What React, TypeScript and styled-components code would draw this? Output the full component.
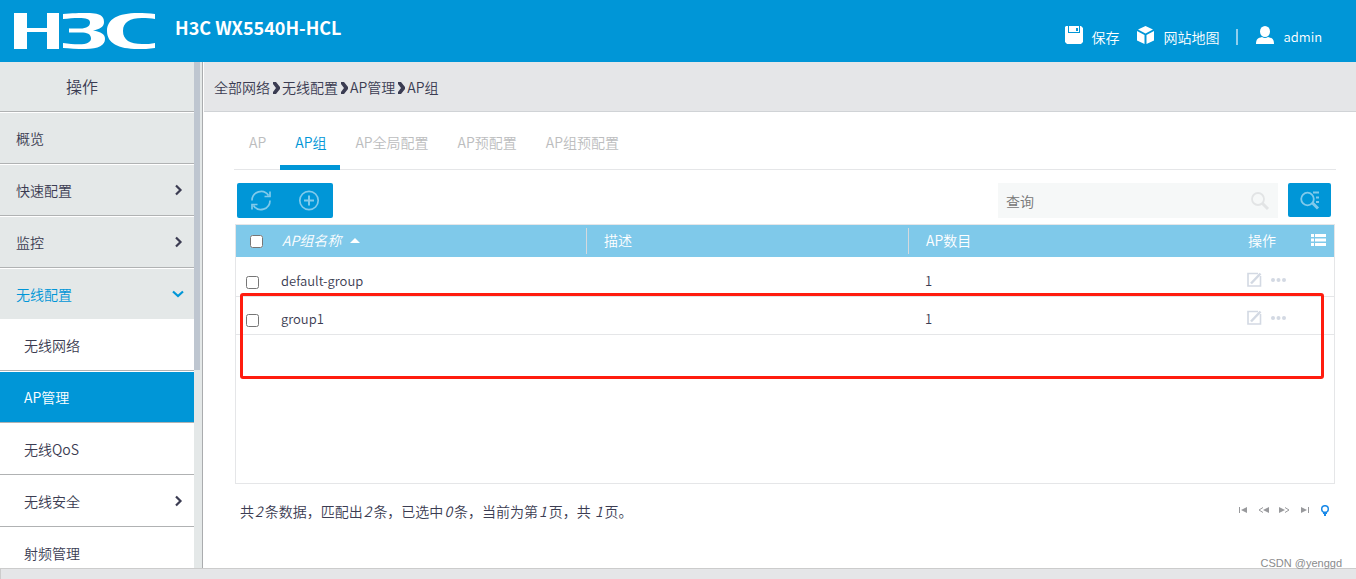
import React from 'react';
import styled, { createGlobalStyle } from 'styled-components';

const blue = '#0096d7';
const ink = '#3b3c52';
const line = '#e5e6e8';

const Global = createGlobalStyle`
  * { box-sizing: border-box; }
  body {
    margin: 0;
    color: ${ink};
    background: #fff;
    font: 350 14px/20px "Noto Sans CJK SC", sans-serif;
  }
  button, input { font: inherit; }
  button { border: 0; padding: 0; background: none; cursor: pointer; }
  a { color: inherit; text-decoration: none; }
`;

const Page = styled.div`
  height: 100vh;
  min-height: 520px;
  display: flex;
  flex-direction: column;
  overflow: hidden;
  position: relative;
`;

const Header = styled.header`
  flex: none;
  height: 62px;
  display: flex;
  background: ${blue};
  color: #fff;
  padding: 0 34px 0 13px;
`;

const Logo = styled.svg`
  width: 142px;
  height: 36px;
  margin-top: 13px;
`;

const Device = styled.h1`
  margin: 12px 0 0 20px;
  font-size: 18px;
  line-height: 30px;
  font-weight: 700;
`;

const HeaderLinks = styled.nav`
  margin-left: auto;
  padding-top: 26px;
  display: flex;
  align-items: flex-start;
`;

const HeaderLink = styled.a`
  display: flex;
  gap: 8px;
  line-height: 22px;
  & + & { margin-left: 17px; }
`;

const UserName = styled.span`
  font-size: 13px;
`;

const Rule = styled.span`
  width: 2px;
  height: 16px;
  margin: 3px 17px 0;
  background: #8fcfee;
`;

const Body = styled.div`
  flex: 1;
  min-height: 0;
  display: flex;
`;

const Sidebar = styled.nav`
  flex: none;
  width: 203px;
  display: flex;
  overflow: hidden;
  background: #e4e8e8;
  border-right: 1px solid #aaacae;
`;

const Menu = styled.div`
  width: 194px;
`;

const MenuTitle = styled.h2`
  margin: 0;
  height: 50px;
  padding-right: 30px;
  line-height: 48px;
  font-size: 16px;
  font-weight: 350;
  text-align: center;
  border-bottom: 1px solid #b0b2b3;
`;

const MenuItem = styled.a<{ $sub?: boolean; $open?: boolean; $current?: boolean }>`
  display: flex;
  align-items: center;
  justify-content: space-between;
  height: ${p => (p.$open ? 51 : 52)}px;
  padding: 0 9px 0 ${p => (p.$sub ? 24 : 16)}px;
  border-top: 1px solid #fff;
  border-bottom: ${p => (p.$open ? '0' : '1px solid #b0b2b3')};
  background: ${p => (p.$current ? blue : p.$sub ? '#fff' : '#e4e8e8')};
  background-clip: padding-box;
  color: ${p => (p.$current ? '#fff' : p.$open ? blue : ink)};
`;

const Thumb = styled.div`
  width: 6px;
  height: 308px;
  background: #bec6d0;
`;

const Main = styled.main`
  flex: 1;
  min-width: 0;
  display: flex;
  flex-direction: column;
  padding-left: 1px;
`;

const Crumbs = styled.nav`
  flex: none;
  height: 50px;
  padding: 0 10px;
  display: flex;
  align-items: center;
  background: ${line};
  border-bottom: 1px solid #d0d3d6;
  svg { margin: 2px 2px 0; }
`;

const Content = styled.section`
  flex: 1;
  min-height: 0;
  display: flex;
  flex-direction: column;
  padding: 0 20px 0 30px;
`;

const Tabs = styled.div`
  flex: none;
  height: 58px;
  display: flex;
  border-bottom: 1px solid ${line};
`;

const Tab = styled.button<{ $active?: boolean }>`
  height: 58px;
  padding: 6px 14px 0 15px;
  border-bottom: 5px solid ${p => (p.$active ? blue : 'transparent')};
  color: ${p => (p.$active ? blue : '#bcbdbe')};
`;

const Toolbar = styled.div`
  flex: none;
  display: flex;
  justify-content: space-between;
  padding: 13px 5px 6px 3px;
`;

const Actions = styled.div`
  display: flex;
  border-radius: 2px;
  background: ${blue};
`;

const Action = styled.button`
  width: 48px;
  height: 35px;
  display: grid;
  place-items: center;
  color: #80caeb;
`;

const SearchGroup = styled.div`
  display: flex;
  gap: 10px;
`;

const SearchBox = styled.label`
  display: flex;
  align-items: center;
  width: 280px;
  height: 35px;
  padding: 0 8px;
  background: #f6f8f8;
  color: #e2e4e5;
`;

const SearchInput = styled.input`
  flex: 1;
  min-width: 0;
  padding: 0;
  border: 0;
  outline: 0;
  background: none;
  color: ${ink};
  &::placeholder { color: #757575; opacity: 1; }
`;

const Advanced = styled.button`
  width: 43px;
  height: 34px;
  display: grid;
  place-items: center;
  border-radius: 2px;
  background: ${blue};
  color: #80caeb;
`;

const Panel = styled.div`
  flex: 1;
  min-height: 160px;
  margin: 0 1px;
  border: 1px solid ${line};
  position: relative;
`;

const Highlight = styled.div`
  position: absolute;
  top: 68px;
  left: 4px;
  right: 10px;
  height: 86px;
  border: 3px solid #ff1c0f;
  border-radius: 3px;
  pointer-events: none;
`;

const Table = styled.table`
  width: 100%;
  table-layout: fixed;
  border-collapse: separate;
  border-spacing: 0;
`;

const CheckCol = styled.col`width: 29px;`;
const OpsCol = styled.col`width: 103px;`;

const Th = styled.th<{ $check?: boolean; $divider?: boolean }>`
  height: 34px;
  padding: 0 0 2px ${p => (p.$check ? 14 : 17)}px;
  border-bottom: 2px solid #fff;
  text-align: left;
  font-weight: 350;
  color: #fff;
  background: #7fc9ea ${p => p.$divider && 'linear-gradient(#d5d9dd, #d5d9dd) right 3px / 1px 26px no-repeat'};
  background-clip: padding-box;
`;

const Td = styled.td<{ $check?: boolean }>`
  height: 38px;
  padding: 0 0 5px ${p => (p.$check ? 10 : 16)}px;
  vertical-align: bottom;
  border-bottom: 1px solid ${line};
  font-size: 13px;
`;

const Check = styled.input<{ $head?: boolean }>`
  display: block;
  width: 13px;
  height: 13px;
  margin: ${p => (p.$head ? '3px 0 0' : '0 0 2px')};
`;

const Sort = styled.button`
  display: flex;
  align-items: center;
  gap: 9px;
  color: #fff;
  font-style: italic;
`;

const Ops = styled.div<{ $head?: boolean }>`
  display: flex;
  align-items: center;
  gap: ${p => (p.$head ? 35 : 9)}px;
  height: 20px;
`;

const IconButton = styled.button`
  display: grid;
  color: inherit;
`;

const RowIcon = styled(IconButton)`
  color: #d3d9e3;
  margin-bottom: 3px;
`;

const Footer = styled.div`
  flex: none;
  height: 84px;
  display: flex;
  justify-content: space-between;
  align-items: flex-start;
  padding: 17px 6px 0;
  i { padding: 0 2px 0 1px; }
`;

const Pager = styled.div`
  display: flex;
  align-items: center;
  gap: 10px;
  height: 18px;
  color: #98999c;
`;

const Bottom = styled.footer`
  flex: none;
  height: 11px;
  background: ${line};
  border-top: 1px solid #ccc;
  border-left: 1px solid #ccc;
`;

const Watermark = styled.span`
  position: absolute;
  right: 14px;
  bottom: 8px;
  font: 11px/16px "Liberation Sans", sans-serif;
  color: #8a8b8d;
`;

const Chevron = ({ down }: { down?: boolean }) => (
  <svg width="14" height="14" viewBox="0 0 14 14" fill="none" stroke="currentColor" strokeWidth="2.2">
    <path d={down ? 'M2 4.500l5 4.500 5-4.500' : 'M5 2.500l4.500 4.500L5 11.500'} />
  </svg>
);

const CrumbArrow = () => (
  <svg width="8" height="12" viewBox="0 0 8 12" fill="currentColor"><path d="M1 0h3l4 5v2l-4 5H1v-2l3-4-3-4z" /></svg>
);

const menu = [
  { label: '概览' },
  { label: '快速配置', arrow: true },
  { label: '监控', arrow: true },
  { label: '无线配置', arrow: true, open: true },
  { label: '无线网络', sub: true },
  { label: 'AP管理', sub: true, current: true },
  { label: '无线QoS', sub: true },
  { label: '无线安全', sub: true, arrow: true },
  { label: '射频管理', sub: true },
];
const crumbs = ['全部网络', '无线配置', 'AP管理', 'AP组'];
const tabs = ['AP', 'AP组', 'AP全局配置', 'AP预配置', 'AP组预配置'];
const groups = [{ name: 'default-group', count: 1 }, { name: 'group1', count: 1 }];

export default function App() {
  return (
    <Page>
      <Global />
      <Header>
        <Logo viewBox="0 0 142 36" role="img" aria-label="H3C" fill="#fff">
          <path d="M1 0h13v15h20V0h12v36H34V19H14v17H1z" />
          <path d="M50 1C58 0 68 0 74 0c16 0 17 5 17 9 0 5-4 7-11 8.500 8 1.500 12 3.500 12 8.500 0 6-6 10-20 10-8 0-16-.5-22-1v-5c6 1 10 1.300 16 1.300 8 0 12-2.300 12-5.800 0-4.500-4-6-10-6H56v-4h11c7 0 10-2.500 10-6S73 5 66 5c-6 0-10 .5-16 1z" />
          <path d="M142 1v5c-4-1-8-1-13-1-12 0-19 4-19 13s7 13 19 13c5 0 9 0 13-1v5c-6 1-12 1-17 1-20 0-31-6-31-18S105 0 125 0c5 0 11 0 17 1z" />
        </Logo>
        <Device>H3C WX5540H-HCL</Device>
        <HeaderLinks>
          <HeaderLink href="#save">
            <svg width="18" height="18" viewBox="0 0 18 18"><path fill="#fff" fillRule="evenodd" d="M0 1l1-1h2v7h12V0h1l2 2v14l-2 2H2l-2-2zM4 0h10v6H4z" /><path fill={blue} d="M11 2h2v3h-2z" /></svg>
            保存
          </HeaderLink>
          <HeaderLink href="#map">
            <svg width="19" height="19" viewBox="0 0 19 19" fill="#fff"><path d="M9.500 0l7.500 3.500-7.500 4L2 3.500zM1 5l7.500 4v9L1 14.500zM18 5l-7.500 4v9l7.500-3.500z" /></svg>
            网站地图
          </HeaderLink>
          <Rule />
          <HeaderLink href="#admin">
            <svg width="20" height="18" viewBox="0 0 20 18" fill="#fff"><ellipse cx="10" cy="5.500" rx="5" ry="5.500" /><path d="M1 18c0-5 2-6 6-7q3 2 6 0c4 1 6 2 6 7z" /></svg>
            <UserName>admin</UserName>
          </HeaderLink>
        </HeaderLinks>
      </Header>
      <Body>
        <Sidebar>
          <Menu>
            <MenuTitle>操作</MenuTitle>
            {menu.map(m => (
              <MenuItem key={m.label} href="#menu" $sub={m.sub} $open={m.open} $current={m.current}>
                {m.label}{m.arrow && <Chevron down={m.open} />}
              </MenuItem>
            ))}
          </Menu>
          <Thumb />
        </Sidebar>
        <Main>
          <Crumbs>
            {crumbs.map((c, i) => <React.Fragment key={c}>{i > 0 && <CrumbArrow />}<a href="#crumb">{c}</a></React.Fragment>)}
          </Crumbs>
          <Content>
            <Tabs>{tabs.map(t => <Tab key={t} $active={t === 'AP组'}>{t}</Tab>)}</Tabs>
            <Toolbar>
              <Actions>
                <Action aria-label="刷新">
                  <svg width="22" height="22" viewBox="0 0 22 22" fill="none" stroke="currentColor" strokeWidth="1.700"><path d="M2 10.500a9 9 0 0 1 16.500-5M20 10.500a9 9 0 0 1-16.500 5M20 1.500v5h-5.500M2 19.500v-5h5.500" /></svg>
                </Action>
                <Action aria-label="添加">
                  <svg width="22" height="22" viewBox="0 0 22 22" fill="none" stroke="currentColor" strokeWidth="1.700"><circle cx="11" cy="10.500" r="9.200" /><path d="M11 5.500v10M6 10.500h10" strokeWidth="2" /></svg>
                </Action>
              </Actions>
              <SearchGroup>
                <SearchBox>
                  <SearchInput placeholder="查询" aria-label="查询" />
                  <svg width="20" height="20" viewBox="0 0 20 20" fill="none" stroke="currentColor"><circle cx="8" cy="8" r="6" strokeWidth="1.800" /><path d="M12 12l6 6" strokeWidth="3" /></svg>
                </SearchBox>
                <Advanced aria-label="高级查询">
                  <svg width="20" height="20" viewBox="0 0 20 20" fill="none" stroke="currentColor" strokeWidth="1.800"><circle cx="7.500" cy="9" r="6.300" /><path d="M13 2.500h6M16 7.500h3M16 12h3" /><path d="M12 12.500l6 6" strokeWidth="3" /></svg>
                </Advanced>
              </SearchGroup>
            </Toolbar>
            <Panel>
              <Table>
                <colgroup><CheckCol /><col /><col /><col /><OpsCol /></colgroup>
                <thead>
                  <tr>
                    <Th $check><Check $head type="checkbox" aria-label="全选" /></Th>
                    <Th $divider><Sort>AP组名称<svg width="10" height="5" viewBox="0 0 10 5" fill="currentColor"><path d="M5 0l5 5H0z" /></svg></Sort></Th>
                    <Th $divider>描述</Th>
                    <Th>AP数目</Th>
                    <Th><Ops $head>操作<IconButton aria-label="列"><svg width="15" height="12" viewBox="0 0 15 12" fill="currentColor"><path d="M0 0h3v3H0zM4 0h11v3H4zM0 4.500h3v3H0zM4 4.500h11v3H4zM0 9h3v3H0zM4 9h11v3H4z" /></svg></IconButton></Ops></Th>
                  </tr>
                </thead>
                <tbody>
                  {groups.map(g => (
                    <tr key={g.name}>
                      <Td $check><Check type="checkbox" aria-label={g.name} /></Td>
                      <Td>{g.name}</Td>
                      <Td />
                      <Td>{g.count}</Td>
                      <Td>
                        <Ops>
                          <RowIcon aria-label="编辑"><svg width="15" height="15" viewBox="0 0 15 15" fill="none" stroke="currentColor"><path d="M13.500 4v10H1V1.500h10" strokeWidth="1.600" /><path d="M4 11.500l9.500-10" strokeWidth="2.500" /></svg></RowIcon>
                          <RowIcon aria-label="更多"><svg width="15" height="4" viewBox="0 0 15 4" fill="currentColor"><circle cx="2" cy="2" r="2" /><circle cx="7.500" cy="2" r="2" /><circle cx="13" cy="2" r="2" /></svg></RowIcon>
                        </Ops>
                      </Td>
                    </tr>
                  ))}
                </tbody>
              </Table>
              <Highlight />
            </Panel>
            <Footer>
              <span>共<i>2</i>条数据，匹配出<i>2</i>条，已选中<i>0</i>条，当前为第<i>1</i>页，共 <i>1</i>页。</span>
              <Pager>
                <IconButton aria-label="首页"><svg width="10" height="6" viewBox="0 0 10 6" fill="currentColor"><path d="M1 0h1v6H1zM9 0v6L3 3z" /></svg></IconButton>
                <IconButton aria-label="上一页"><svg width="11" height="6" viewBox="0 0 11 6" fill="currentColor"><path d="M11 0v6L5 3z" /><path d="M5 .500L1 3l4 2.500" fill="none" stroke="currentColor" /></svg></IconButton>
                <IconButton aria-label="下一页"><svg width="11" height="6" viewBox="0 0 11 6" fill="currentColor"><path d="M0 0v6l6-3z" /><path d="M6 .500L10 3 6 5.500" fill="none" stroke="currentColor" /></svg></IconButton>
                <IconButton aria-label="末页"><svg width="10" height="6" viewBox="0 0 10 6" fill="currentColor"><path d="M8 0h1v6H8zM1 0v6l6-3z" /></svg></IconButton>
                <IconButton aria-label="提示"><svg width="10" height="11" viewBox="0 0 10 11" fill="none" stroke="#1989e8" strokeWidth="1.500"><circle cx="5" cy="4" r="3.300" /><path d="M3 8h4M4 10h2" strokeWidth="2" /></svg></IconButton>
              </Pager>
            </Footer>
          </Content>
        </Main>
      </Body>
      <Bottom />
      <Watermark>CSDN @yenggd</Watermark>
    </Page>
  );
}
